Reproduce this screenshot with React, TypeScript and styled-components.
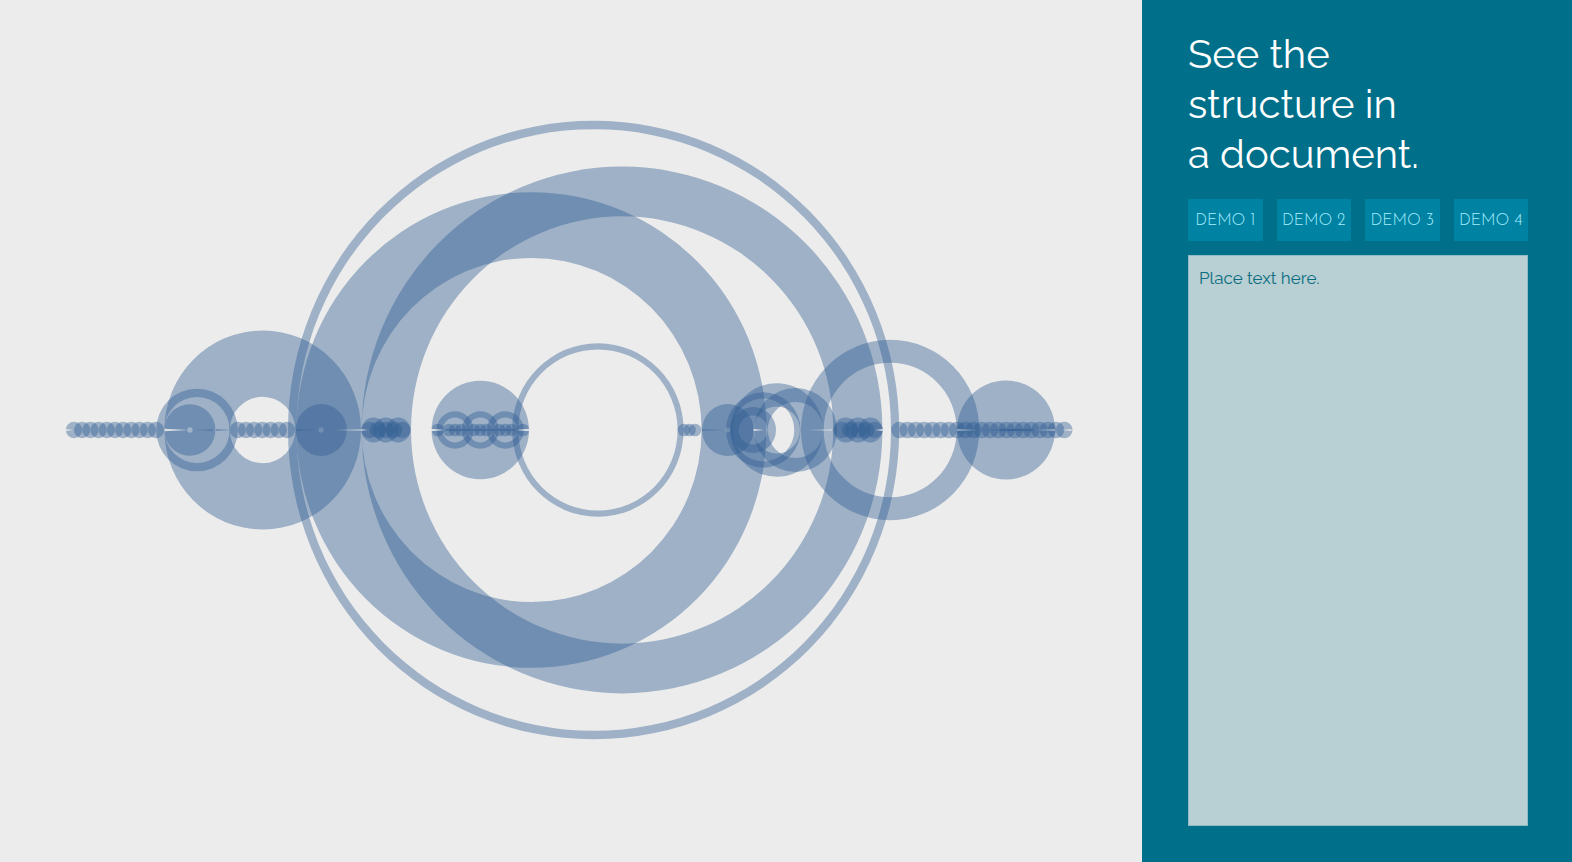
import React from 'react';
import styled, { createGlobalStyle } from 'styled-components';

const Global = createGlobalStyle`
  * { box-sizing: border-box; }
  body { margin: 0; background: #ececec; font-family: Raleway, Lato, "Open Sans", sans-serif; }
`;

const Page = styled.div`
  display: flex;
  min-height: 100vh;
`;

const Stage = styled.main`
  flex: 1;
  min-width: 0;
  display: flex;
  background: #ececec;
`;

const Diagram = styled.svg`
  width: 100%;
  height: auto;
  align-self: center;
`;

const Sidebar = styled.aside`
  flex: 0 0 430px;
  display: flex;
  flex-direction: column;
  padding: 29px 44px 36px 46px;
  background: #006f8a;
`;

const Title = styled.h1`
  margin: 0;
  color: #fff;
  font-size: 40px;
  line-height: 50px;
  font-weight: 400;
`;

const DemoRow = styled.div`
  display: grid;
  grid-template-columns: repeat(4, 1fr);
  gap: 14px;
  margin: 20px 0 14px;
`;

const DemoButton = styled.button`
  height: 42px;
  padding: 2px 0 0;
  border: 0;
  background: #0082a2;
  color: #a8f0ff;
  font-family: "Josefin Sans", Lato, sans-serif;
  font-size: 16px;
  font-weight: 300;
  white-space: nowrap;
  cursor: pointer;
`;

const TextBox = styled.textarea`
  flex: 1;
  width: 100%;
  padding: 11px 10px;
  border: 1px solid #8fbcc4;
  border-radius: 0;
  background: #b8cfd3;
  color: #0a6e80;
  font-family: Raleway, Lato, sans-serif;
  font-size: 17px;
  line-height: 22px;
  resize: none;
  &::placeholder { color: #0a6e80; opacity: 1; }
`;

const CY = 430;
const RATIO = 1.012;

type Span = [number, number, number, number];

const chain = (start: number, step: number, count: number, r: number): Span[] =>
  Array.from({ length: count }, (_, i) => {
    const c = start + r + i * step;
    return [c - r, c, c, c + r] as Span;
  });

const spans: Span[] = [
  [288, 296.4, 891, 899.2],
  [296.4, 361.6, 701.6, 766.4],
  [361.6, 411, 833.2, 882.4],
  [164.4, 229.8, 295.4, 361],
  [156.2, 164.4, 229.6, 237.8],
  [164.4, 187.2, 192.6, 215.4],
  [295.6, 318.4, 323.8, 346.8],
  [702, 725.4, 730.4, 753.6],
  [512.2, 518.3, 677.6, 683.6],
  [431.6, 480.3, 480.3, 529],
  [436.5, 442.7, 467.3, 473.5],
  [461.8, 468, 492.6, 498.8],
  [486.8, 493, 517.6, 523.8],
  [730.5, 753.6, 800, 823],
  [754, 767.8, 823.2, 837],
  [726, 732.2, 794.3, 800.5],
  [730.4, 738.6, 767.4, 776],
  [801, 823.7, 956.7, 979.3],
  [957, 1006, 1006, 1055],
  ...chain(65.8, 8.2, 11, 8.2),
  ...chain(229.6, 8.2, 7, 8.2),
  ...chain(891.2, 8.24, 21, 8.24),
  ...chain(361.2, 12.3, 3, 12.3),
  ...chain(361.4, 8.2, 5, 8.2),
  ...chain(833.4, 12.3, 3, 12.3),
  ...chain(833.6, 8.2, 5, 8.2),
  ...chain(677.8, 5.6, 3, 6.2),
  ...chain(431.6, 85.2, 2, 6.2),
  ...chain(442.6, 6.2, 3, 6.2),
  ...chain(467.8, 6.2, 3, 6.2),
  ...chain(493, 6.2, 3, 6.2),
];

// Hairlines where the two halves of an arch meet: from the wide end to the point.
const lightSeams = [
  [164.5, 188, 1.3], [66, 73, 0.9], [1071.5, 1062, 0.9], [431, 445, 1.2],
  [529, 516, 1.2], [361, 335, 0.6], [361, 368, 0.8], [753.6, 764, 0.9],
  [832, 808, 0.6], [882.8, 875, 0.9], [956.8, 978, 0.6], [1055, 1036, 0.6],
];
const darkSeams = [
  [213, 193, 0.7], [216, 232, 0.9], [296, 318, 0.8], [702, 725, 0.7],
  [445, 518, 0.9], [516, 444, 0.9], [1000, 1034, 1.4], [1034, 978, 1.4],
];

const seam = ([from, to, h]: number[]) => `M${from} ${CY - h}L${to} ${CY}L${from} ${CY + h}Z`;

const ring = ([a, b, c, d]: Span) => {
  const oval = (l: number, r: number) => {
    const rx = (r - l) / 2;
    const ry = rx * RATIO;
    return `M${l} ${CY}A${rx} ${ry} 0 0 1 ${r} ${CY}A${rx} ${ry} 0 0 1 ${l} ${CY}Z`;
  };
  return oval(a, d) + (c > b ? oval(b, c) : '');
};

export default function App() {
  return (
    <>
      <Global />
      <Page>
        <Stage>
          <Diagram viewBox="0 0 1142 862" role="img" aria-label="Arc diagram of repeated passages">
            <g fill="#2e5d91" fillOpacity="0.41" fillRule="evenodd">
              {spans.map((s, i) => <path key={i} d={ring(s)} />)}
              {darkSeams.map((s, i) => <path key={`d${i}`} d={seam(s)} />)}
            </g>
            <g fill="#ececec" fillOpacity="0.85">
              {lightSeams.map((s, i) => <path key={i} d={seam(s)} />)}
            </g>
          </Diagram>
        </Stage>
        <Sidebar>
          <Title>See the<br />structure in<br />a document.</Title>
          <DemoRow>
            {[1, 2, 3, 4].map((n) => <DemoButton key={n} type="button">DEMO {n}</DemoButton>)}
          </DemoRow>
          <TextBox aria-label="Document text" placeholder="Place text here." />
        </Sidebar>
      </Page>
    </>
  );
}
